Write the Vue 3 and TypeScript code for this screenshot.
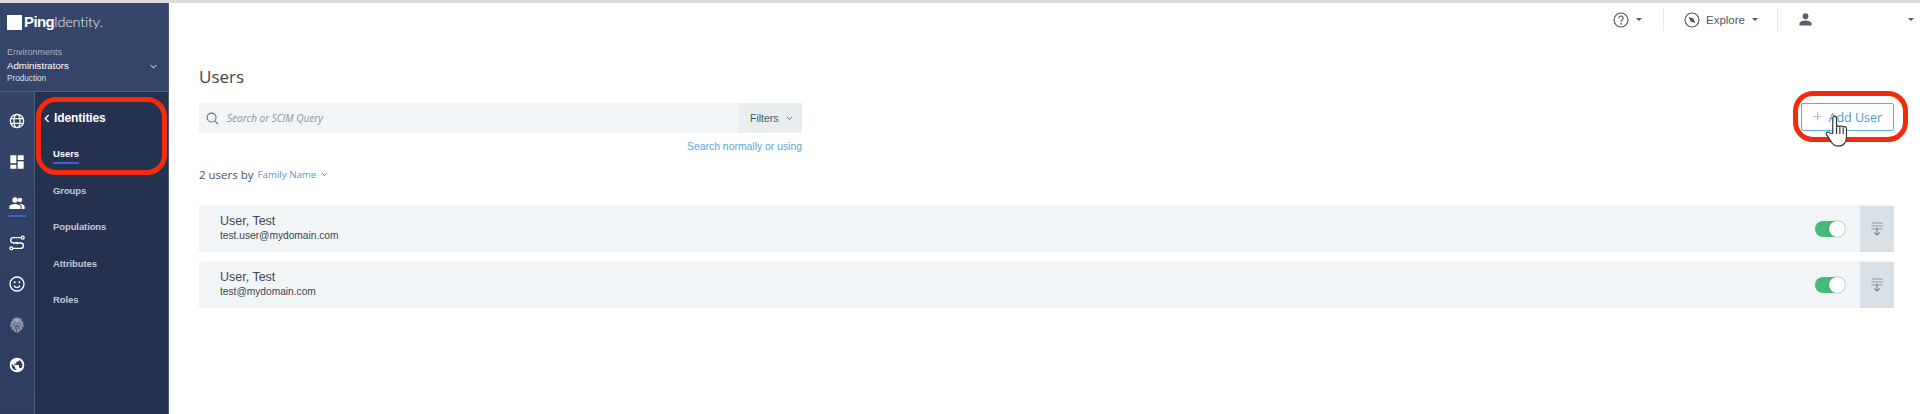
<template>
  <div class="app">
    <!-- Sidebar -->
    <aside class="sidebar">
      <div class="env">
        <div class="logo">
          <span class="logo-box"></span>
          <span class="logo-ping">Ping</span><span class="logo-identity">Identity.</span>
        </div>
        <div class="env-label">Environments</div>
        <div class="env-row">
          <div class="env-name">Administrators</div>
          <svg class="env-chevron" viewBox="0 0 10 6"><path d="M1 1l4 4 4-4" /></svg>
        </div>
        <div class="env-type">Production</div>
      </div>
      <div class="nav">
        <div class="rail">
          <div v-for="icon in railIcons" :key="icon" class="rail-item" :class="{ active: icon === 'people' }">
            <svg v-if="icon === 'globe'" viewBox="0 0 24 24" class="stroke">
              <circle cx="12" cy="12" r="10" />
              <ellipse cx="12" cy="12" rx="4.5" ry="10" />
              <path d="M2.8 8.5h18.4M2.8 15.5h18.4" />
            </svg>
            <svg v-else-if="icon === 'dashboard'" viewBox="0 0 24 24" class="fill">
              <path d="M2 2h9v12H2zM13 2h9v7h-9zM13 11h9v11h-9zM2 16h9v6H2z" />
            </svg>
            <svg v-else-if="icon === 'people'" viewBox="0 0 24 24" class="fill">
              <path d="M9 11.5a4 4 0 1 0 0-8 4 4 0 0 0 0 8zM16.5 11a3.4 3.4 0 1 0 0-6.8 3.4 3.4 0 0 0 0 6.800zM9 13.5c-3 0-8.5 1.400-8.500 4.200V21h17v-3.300c0-2.800-5.500-4.200-8.500-4.200zM16.500 13.200h-1.100c1.900 1.100 3.600 2.600 3.600 4.500V21h4.500v-3.300c0-2.700-4.400-4.500-7-4.500z" />
            </svg>
            <svg v-else-if="icon === 'flow'" viewBox="0 0 24 24" class="stroke">
              <circle cx="20.5" cy="4" r="2.2" />
              <circle cx="3.5" cy="20" r="2.2" />
              <path d="M18 4H6.500a4 4 0 0 0 0 8h11a4 4 0 0 1 0 8H6" />
              <circle cx="12" cy="12" r="2" class="dot" />
            </svg>
            <svg v-else-if="icon === 'smile'" viewBox="0 0 24 24" class="stroke">
              <circle cx="12" cy="12" r="10.5" />
              <circle cx="8.5" cy="9.5" r="1.5" class="dot" />
              <circle cx="15.5" cy="9.5" r="1.5" class="dot" />
              <path d="M7.500 14.500c1.200 2 2.800 3 4.500 3s3.300-1 4.500-3" />
            </svg>
            <svg v-else-if="icon === 'finger'" viewBox="0 0 24 24" class="finger">
              <path d="M5 4.500a11 11 0 0 1 14 0" />
              <path d="M3 9a10 10 0 0 1 18 0" />
              <path d="M2.500 14.500a9.500 9.500 0 0 1 19 0" />
              <path d="M5 19c-.5-2-.5-3.500-.5-5a7.500 7.500 0 0 1 15 0c0 1.500 0 3-.5 5" />
              <path d="M8 21.500c-1-2.500-1.500-5-1.500-7.500a5.500 5.500 0 0 1 11 0c0 2.500-.5 5-1.500 7.500" />
              <path d="M10.500 23c-1-3-1.700-6-1.700-9a3.200 3.200 0 0 1 6.400 0c0 3-.7 6-1.700 9" />
              <path d="M12 13c0 3.500.2 7 .5 10" />
            </svg>
            <svg v-else viewBox="0 0 24 24" class="fill">
              <path fill-rule="evenodd" d="M12 1a11 11 0 1 0 0 22 11 11 0 0 0 0-22zM4 12c0-.7.1-1.300.2-1.900L9 15v1c0 1.100.9 2 2 2v2a8 8 0 0 1-7-8zm13.900 5.400c-.3-.8-1-1.400-1.900-1.400h-1v-3c0-.6-.4-1-1-1H8v-2h2c.6 0 1-.4 1-1V7h2c1.100 0 2-.9 2-2v-.4a8 8 0 0 1 2.900 12.800z" />
            </svg>
          </div>
        </div>
        <nav class="subnav">
          <div class="subnav-title">
            <svg viewBox="0 0 7 10"><path d="M5.500 1L1.500 5l4 4" /></svg>
            Identities
          </div>
          <a v-for="item in navItems" :key="item" class="subnav-link" :class="{ current: item === 'Users' }">
            <span>{{ item }}</span>
          </a>
        </nav>
      </div>
    </aside>

    <!-- Main -->
    <div class="main">
      <header class="topbar">
        <div class="top-item help">
          <svg class="top-icon" viewBox="0 0 24 24">
            <circle cx="12" cy="12" r="10.5" />
            <path d="M8.800 9.300a3.200 3.200 0 1 1 4.900 2.700c-1 .7-1.700 1.300-1.700 2.600" />
            <circle cx="12" cy="17.8" r=".6" />
          </svg>
          <span class="caret"></span>
        </div>
        <div class="top-item explore">
          <svg class="top-icon" viewBox="0 0 24 24">
            <circle cx="12" cy="12" r="10.5" />
            <path class="solid" d="M7 7l7.500 3 2.500 7-7.500-3z" />
          </svg>
          <span class="explore-label">Explore</span>
          <span class="caret"></span>
        </div>
        <div class="top-item account">
          <svg class="user-icon" viewBox="0 0 14 14">
            <circle cx="7" cy="3.5" r="3.1" />
            <path d="M0.500 13.500v-2c0-2.300 4-3.300 6.500-3.300s6.500 1 6.500 3.300v2z" />
          </svg>
          <span class="caret"></span>
        </div>
      </header>

      <main class="content">
        <h1 class="page-title">Users</h1>
        <div class="toolbar">
          <div class="search-col">
            <div class="search">
              <svg class="search-icon" viewBox="0 0 14 14"><circle cx="6" cy="6" r="4.8" /><path d="M9.500 9.500L13 13" /></svg>
              <span class="search-text">Search or SCIM Query</span>
              <div class="filters">
                Filters
                <svg viewBox="0 0 10 6"><path d="M1.500 1l3.500 3.500L8.500 1" /></svg>
              </div>
            </div>
            <a class="search-help">Search normally or using</a>
          </div>
          <button class="add-btn"><span class="plus">+</span>Add User</button>
        </div>

        <div class="count">
          <span>2 users by</span>
          <span class="sort">Family Name</span>
          <svg viewBox="0 0 10 6"><path d="M1.500 1l3.500 3.500L8.500 1" /></svg>
        </div>

        <div class="rows">
          <div v-for="user in users" :key="user.email" class="row">
            <div class="row-text">
              <div class="row-name">{{ user.name }}</div>
              <div class="row-email">{{ user.email }}</div>
            </div>
            <div class="toggle"><span class="knob"></span></div>
            <div class="row-action">
              <svg viewBox="0 0 12 14">
                <path d="M0.500 1h11M0.500 4h11M0.500 7h11" class="lines" />
                <path d="M6 6v7M3 10.500L6 13l3-2.500" class="arrow" />
              </svg>
            </div>
          </div>
        </div>
      </main>
    </div>

    <!-- Annotations drawn over the screenshot -->
    <div class="callout callout-nav"></div>
    <div class="callout callout-add"></div>
    <svg class="hand" viewBox="0 0 26 36">
      <path d="M8 3.500c0-3 4-3 4 0V13c0-2 3.500-2 3.500 0 0-1.800 3.500-1.800 3.500.3 0-1.500 3.500-1.500 3.500.7v9c0 6-3 10-9 10-4 0-6-2-8-6l-4-6c-1.500-2.500 1.500-4 3.500-2L8 19.500z" />
      <path d="M12 13v7M15.500 13v7M19 13.500v6.500" />
    </svg>
  </div>
</template>

<script setup lang="ts">
const railIcons = ['globe', 'dashboard', 'people', 'flow', 'smile', 'finger', 'world']
const navItems = ['Users', 'Groups', 'Populations', 'Attributes', 'Roles']

const users = [
  { name: 'User, Test', email: 'test.user@mydomain.com' },
  { name: 'User, Test', email: 'test@mydomain.com' },
]
</script>

<style>
html,
body {
  margin: 0;
  background: #fff;
}
</style>

<style scoped>
.app {
  position: relative;
  display: flex;
  width: 1920px;
  height: 414px;
  padding-top: 3px;
  box-sizing: border-box;
  overflow: hidden;
  background: #fff;
  font-family: 'Open Sans', 'Liberation Sans', sans-serif;
  color: #3d454d;
}

.app::before {
  content: '';
  position: absolute;
  top: 0;
  left: 0;
  right: 0;
  height: 3px;
  background: #dcdcdc;
}

/* Sidebar */
.sidebar {
  width: 169px;
  flex-shrink: 0;
  display: flex;
  flex-direction: column;
  background: linear-gradient(180deg, #34466a 0%, #2c3d5f 100%);
  color: #fff;
  font-family: 'Liberation Sans', sans-serif;
  border-right: 1px solid #4a5a78;
  box-sizing: border-box;
}

.env {
  height: 89px;
  padding: 0 0 0 7px;
  border-bottom: 1px solid #4f5f7e;
  box-sizing: border-box;
}

.logo {
  display: flex;
  align-items: center;
  height: 16px;
  margin-top: 11px;
  font-size: 15px;
  line-height: 16px;
}

.logo-box {
  width: 15px;
  height: 15px;
  background: #fff;
  margin-right: 2px;
}

.logo-ping {
  font-weight: 700;
  letter-spacing: -0.6px;
}

.logo-identity {
  font-family: Lato, 'Liberation Sans', sans-serif;
  font-size: 14.5px;
  font-weight: 300;
  color: #eceef2;
  letter-spacing: -0.2px;
}

.env-label {
  margin-top: 16px;
  font-size: 9px;
  line-height: 12px;
  color: #aab2c0;
}

.env-row {
  display: flex;
  align-items: center;
  justify-content: space-between;
  padding-right: 11px;
  margin-top: 2px;
}

.env-name {
  font-size: 9.7px;
  line-height: 12px;
}

.env-chevron {
  width: 7px;
  height: 5px;
  fill: none;
  stroke: #fff;
  stroke-width: 1.4;
}

.env-type {
  margin-top: 1px;
  font-size: 8.2px;
  line-height: 12px;
  color: #dfe3ea;
}

.nav {
  flex: 1;
  display: flex;
}

.rail {
  width: 34px;
  border-right: 1px solid #4a5a78;
  padding-top: 9px;
}

.rail-item {
  height: 40.7px;
  display: flex;
  align-items: center;
  justify-content: center;
  padding-right: 1px;
  box-sizing: border-box;
  position: relative;
}

.rail-item svg {
  width: 16px;
  height: 16px;
}

.rail-item.active::after {
  content: '';
  position: absolute;
  left: 7px;
  right: 8px;
  bottom: 6px;
  height: 2px;
  background: #3f5fd0;
}

.stroke {
  fill: none;
  stroke: #fff;
  stroke-width: 2;
}

.stroke .dot {
  fill: #fff;
  stroke: none;
}

.fill {
  fill: #fff;
}

.finger {
  fill: none;
  stroke: #c9ced8;
  stroke-width: 1.2;
}

.subnav {
  flex: 1;
  background: #25324f;
  padding-top: 18px;
}

.subnav-title {
  display: flex;
  align-items: center;
  height: 16px;
  padding-left: 9px;
  font-size: 12px;
  font-weight: 700;
  letter-spacing: -0.1px;
  gap: 4px;
}

.subnav-title svg {
  width: 6px;
  height: 9px;
  fill: none;
  stroke: #fff;
  stroke-width: 1.6;
}

.subnav-link {
  display: block;
  padding-left: 18px;
  height: 36.5px;
  font-size: 9.5px;
  font-weight: 700;
  letter-spacing: -0.1px;
  color: #c3c8d2;
}

.subnav-link:first-of-type {
  margin-top: 22px;
}

.subnav-link span {
  display: inline-block;
  line-height: 12px;
  padding-bottom: 2px;
}

.subnav-link.current {
  color: #fff;
}

.subnav-link.current span {
  border-bottom: 2px solid #3f5fd0;
}

/* Top bar */
.main {
  flex: 1;
  min-width: 0;
}

.topbar {
  display: flex;
  justify-content: flex-end;
  height: 24px;
  margin-top: 5px;
  font-family: 'Liberation Sans', sans-serif;
}

.top-item {
  display: flex;
  align-items: center;
  box-sizing: border-box;
  height: 23px;
}

.top-item + .top-item {
  border-left: 1px solid #e6e8ea;
}

.help {
  width: 50px;
}

.explore {
  width: 114px;
  padding-left: 20px;
}

.account {
  width: 143px;
  padding-left: 21px;
  padding-right: 6px;
}

.top-icon {
  width: 16px;
  height: 16px;
  fill: none;
  stroke: #4e5661;
  stroke-width: 1.7;
}

.top-icon .solid {
  fill: #4e5661;
  stroke: none;
}

.explore-label {
  margin: 0 7px 0 6px;
  font-size: 11.5px;
  color: #4e5661;
}

.caret {
  width: 0;
  height: 0;
  border-left: 3px solid transparent;
  border-right: 3px solid transparent;
  border-top: 3px solid #4e5661;
}

.help .caret {
  margin-left: 7px;
}

.user-icon {
  width: 13px;
  height: 13px;
  fill: #57606b;
}

.account .caret {
  margin-left: auto;
}

/* Content */
.content {
  padding: 0 26px 0 30px;
}

.page-title {
  margin: 34px 0 0;
  height: 22px;
  font-size: 17px;
  line-height: 22px;
  font-weight: 400;
  color: #3d454d;
}

.toolbar {
  display: flex;
  justify-content: space-between;
  align-items: flex-start;
  margin-top: 15px;
}

.search-col {
  width: 603px;
}

.search {
  display: flex;
  align-items: center;
  height: 30px;
  background: #f1f5f8;
  font-size: 10px;
}

.search-icon {
  width: 13px;
  height: 13px;
  margin-left: 7px;
  fill: none;
  stroke: #5d6a78;
  stroke-width: 1.1;
}

.search-text {
  margin-left: 8px;
  flex: 1;
  font-size: 10px;
  font-style: italic;
  color: #8b96a3;
}

.filters {
  display: flex;
  align-items: center;
  gap: 7px;
  width: 64px;
  height: 30px;
  padding-left: 12px;
  box-sizing: border-box;
  background: #e8edf0;
  font-family: 'Liberation Sans', sans-serif;
  font-size: 10.5px;
  color: #4e5661;
}

.filters svg,
.count svg {
  width: 7px;
  height: 5px;
  fill: none;
  stroke: #4e5661;
  stroke-width: 1.1;
}

.search-help {
  display: block;
  margin-top: 7px;
  text-align: right;
  font-family: 'Liberation Sans', sans-serif;
  font-size: 10.4px;
  line-height: 13px;
  color: #5ca3d9;
}

.add-btn {
  width: 93px;
  height: 28px;
  border: 1px solid #62aedb;
  border-radius: 2px;
  background: #fff;
  color: #4a9cd4;
  font-family: 'Open Sans', sans-serif;
  font-size: 12.5px;
  padding: 0;
}

.plus {
  margin-right: 6px;
  font-size: 17px;
  font-weight: 300;
  line-height: 12px;
  color: #7f95ad;
}

.count {
  display: flex;
  align-items: center;
  gap: 4px;
  margin-top: 13px;
  height: 16px;
  font-size: 11.5px;
  color: #4a5058;
}

.count .sort {
  font-size: 9.7px;
  color: #4a9cd4;
  margin-right: 1px;
}

.rows {
  margin-top: 23px;
  display: flex;
  flex-direction: column;
  gap: 9px;
}

.row {
  display: flex;
  align-items: center;
  height: 47px;
  background: #f2f5f8;
  font-family: 'Liberation Sans', sans-serif;
}

.row-text {
  flex: 1;
  padding-left: 21px;
}

.row-name {
  font-size: 12.5px;
  line-height: 15px;
  color: #3d454d;
}

.row-email {
  font-size: 10.2px;
  line-height: 14px;
  color: #3d454d;
}

.toggle {
  position: relative;
  width: 30px;
  height: 16px;
  border-radius: 8px;
  background: #46b979;
  margin-right: 15px;
}

.knob {
  position: absolute;
  right: 0;
  top: 0;
  width: 16px;
  height: 16px;
  border-radius: 50%;
  background: #fff;
  box-shadow: 0 0 2px rgba(0, 0, 0, 0.35);
}

.row-action {
  width: 34px;
  height: 46px;
  display: flex;
  align-items: center;
  justify-content: center;
  background: #d9e0e6;
}

.row-action svg {
  width: 12px;
  height: 14px;
  fill: none;
}

.lines {
  stroke: #8d97a2;
  stroke-width: 1;
}

.arrow {
  stroke: #6d6f7a;
  stroke-width: 1;
}

/* Annotations */
.callout {
  position: absolute;
  box-sizing: border-box;
  border: 5px solid #f42a0c;
}

.callout-nav {
  left: 36px;
  top: 97px;
  width: 131px;
  height: 78px;
  border-radius: 20px;
}

.callout-add {
  left: 1793px;
  top: 91px;
  width: 115px;
  height: 51px;
  border-radius: 20px;
}

.hand {
  position: absolute;
  left: 1825px;
  top: 115px;
  width: 25px;
  height: 34px;
  fill: #fff;
  stroke: #2b2b2b;
  stroke-width: 1.2;
}
</style>
